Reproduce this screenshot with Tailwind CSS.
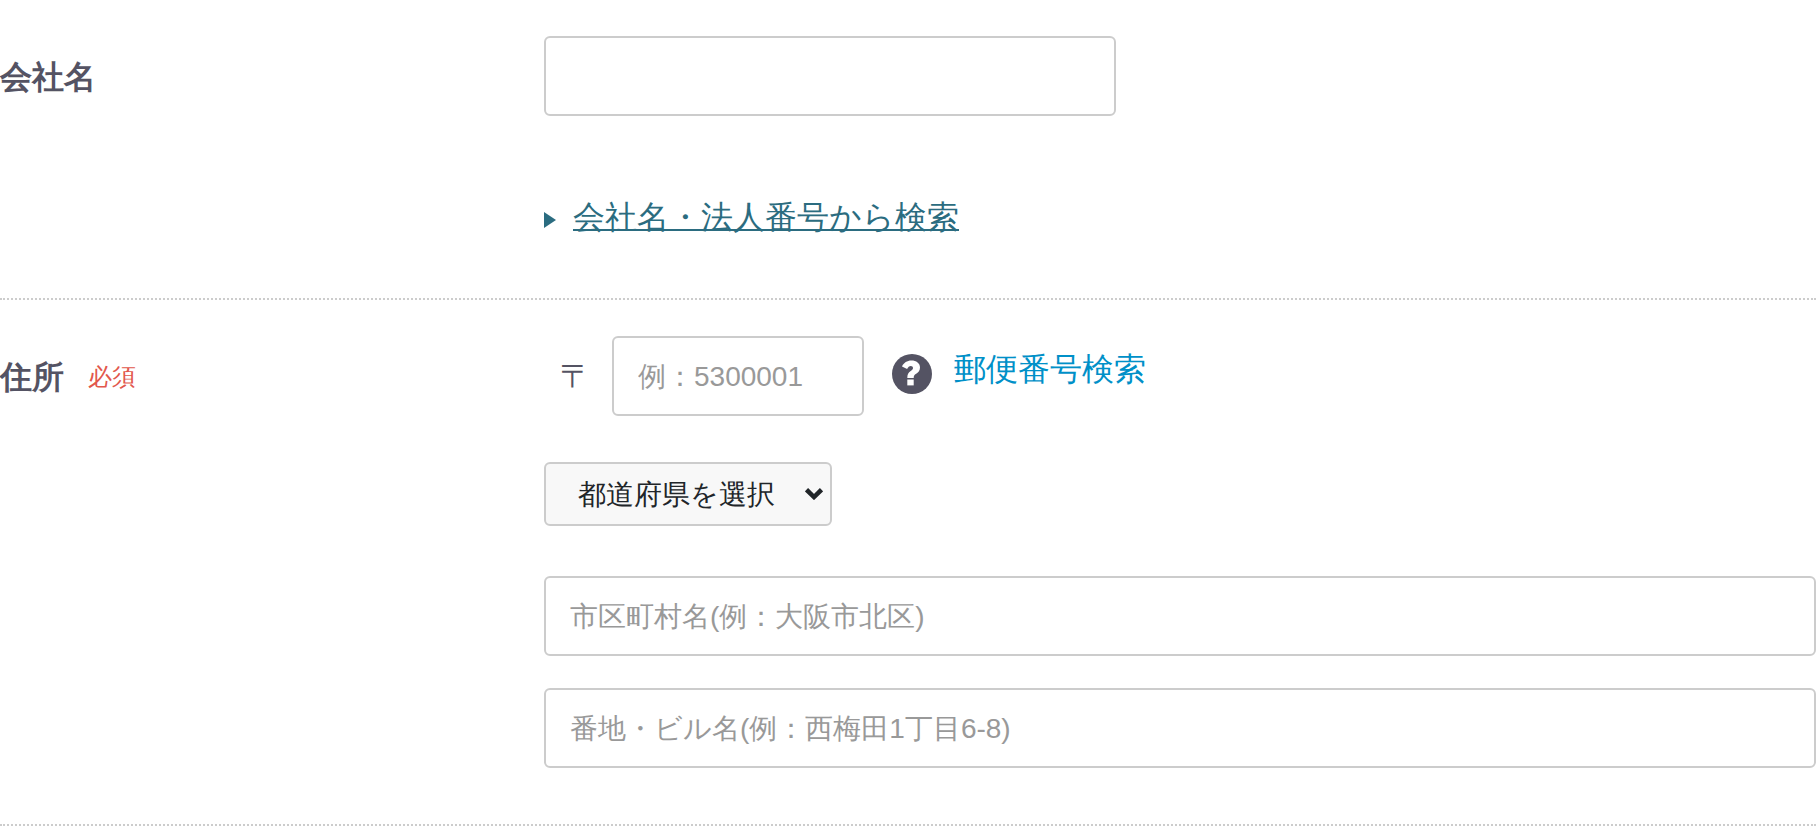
<!DOCTYPE html>
<html lang="ja">
<head>
<meta charset="utf-8">
<meta name="viewport" content="width=device-width, initial-scale=1">
<title>会社情報</title>
<script src="https://cdn.jsdelivr.net/npm/@tailwindcss/browser@4"></script>
</head>
<body class="bg-white text-[32px] leading-[48px] text-[#545363] font-['Liberation_Sans',sans-serif]">
<form>
  <div class="flex border-b-2 border-dotted border-[#ccc] pt-9 pb-16">
    <div class="w-[544px] shrink-0 pt-[17px]">
      <label for="company" class="font-bold">会社名</label>
    </div>
    <div class="min-w-0 flex-1">
      <input id="company" type="text" class="block h-20 w-[45%] rounded-md border-2 border-[#ccc] bg-white px-6 text-[28px]">
      <div class="mt-[78px] flex h-10 items-center">
        <svg class="mt-3 mr-[17px] h-4 w-3 shrink-0" viewBox="0 0 12 16" fill="#2b6c80" aria-hidden="true"><path d="M0 0L12 8L0 16Z"/></svg>
        <a href="#" class="mt-1.5 text-[#2b6c80] underline decoration-2">会社名・法人番号から検索</a>
      </div>
    </div>
  </div>

  <div class="flex border-b-2 border-dotted border-[#ccc] pt-9 pb-14">
    <div class="flex w-[544px] shrink-0 items-center self-start pt-[17px]">
      <label for="zip" class="font-bold">住所</label>
      <span class="ml-6 text-2xl text-[#e2574c]">必須</span>
    </div>
    <div class="min-w-0 flex-1">
      <div class="flex h-20 items-center">
        <span class="ml-4 w-[52px]">〒</span>
        <input id="zip" type="text" placeholder="例：5300001" class="h-20 w-[252px] rounded-md border-2 border-[#ccc] bg-white px-6 pt-0.5 text-[28px] placeholder:text-[#999]">
        <svg class="mr-[22px] mb-1 ml-7 size-10 shrink-0" viewBox="0 0 40 40" role="img" aria-label="ヘルプ">
          <circle cx="20" cy="20" r="20" fill="#545363"/>
          <path d="M10 12.500C11.700 8.800 15.200 6.600 19.300 6.600C24.400 6.600 28 9.300 28 13.600C28 17 26 18.700 24.200 19.800C22.300 21 21.700 21.800 21.700 23.900H15.300C15.300 20.300 16.300 18.500 18.700 17C20.300 16 21 15.300 21 14.100C21 12.800 20.100 12.100 18.800 12.100C17.100 12.100 16.200 13.100 15.100 15.100Z" fill="#fff"/>
          <path d="M15.300 25.500H21.700V31.400H15.300Z" fill="#fff"/>
        </svg>
        <a href="#" class="mb-3.5 text-[#0090c8]">郵便番号検索</a>
      </div>
      <div class="relative mt-[46px] w-72">
        <select aria-label="都道府県" class="block h-16 w-full appearance-none rounded-md border-2 border-[#ccc] bg-[#f8f8f8] pt-0.5 pr-12 pl-8 text-[28px] text-[#212529]">
          <option>都道府県を選択</option>
        </select>
        <svg class="pointer-events-none absolute top-[26px] right-[9px] h-3 w-[18px]" viewBox="0 0 18 12" fill="none" stroke="#212529" stroke-width="4.500" aria-hidden="true"><path d="M1.500 1.700L9 9L16.500 1.700"/></svg>
      </div>
      <input type="text" aria-label="市区町村名" placeholder="市区町村名(例：大阪市北区)" class="mt-[50px] block h-20 w-full rounded-md border-2 border-[#ccc] bg-white px-6 pt-0.5 text-[28px] placeholder:text-[#999]">
      <input type="text" aria-label="番地・ビル名" placeholder="番地・ビル名(例：西梅田1丁目6-8)" class="mt-8 block h-20 w-full rounded-md border-2 border-[#ccc] bg-white px-6 pt-0.5 text-[28px] placeholder:text-[#999]">
    </div>
  </div>
</form>
</body>
</html>
